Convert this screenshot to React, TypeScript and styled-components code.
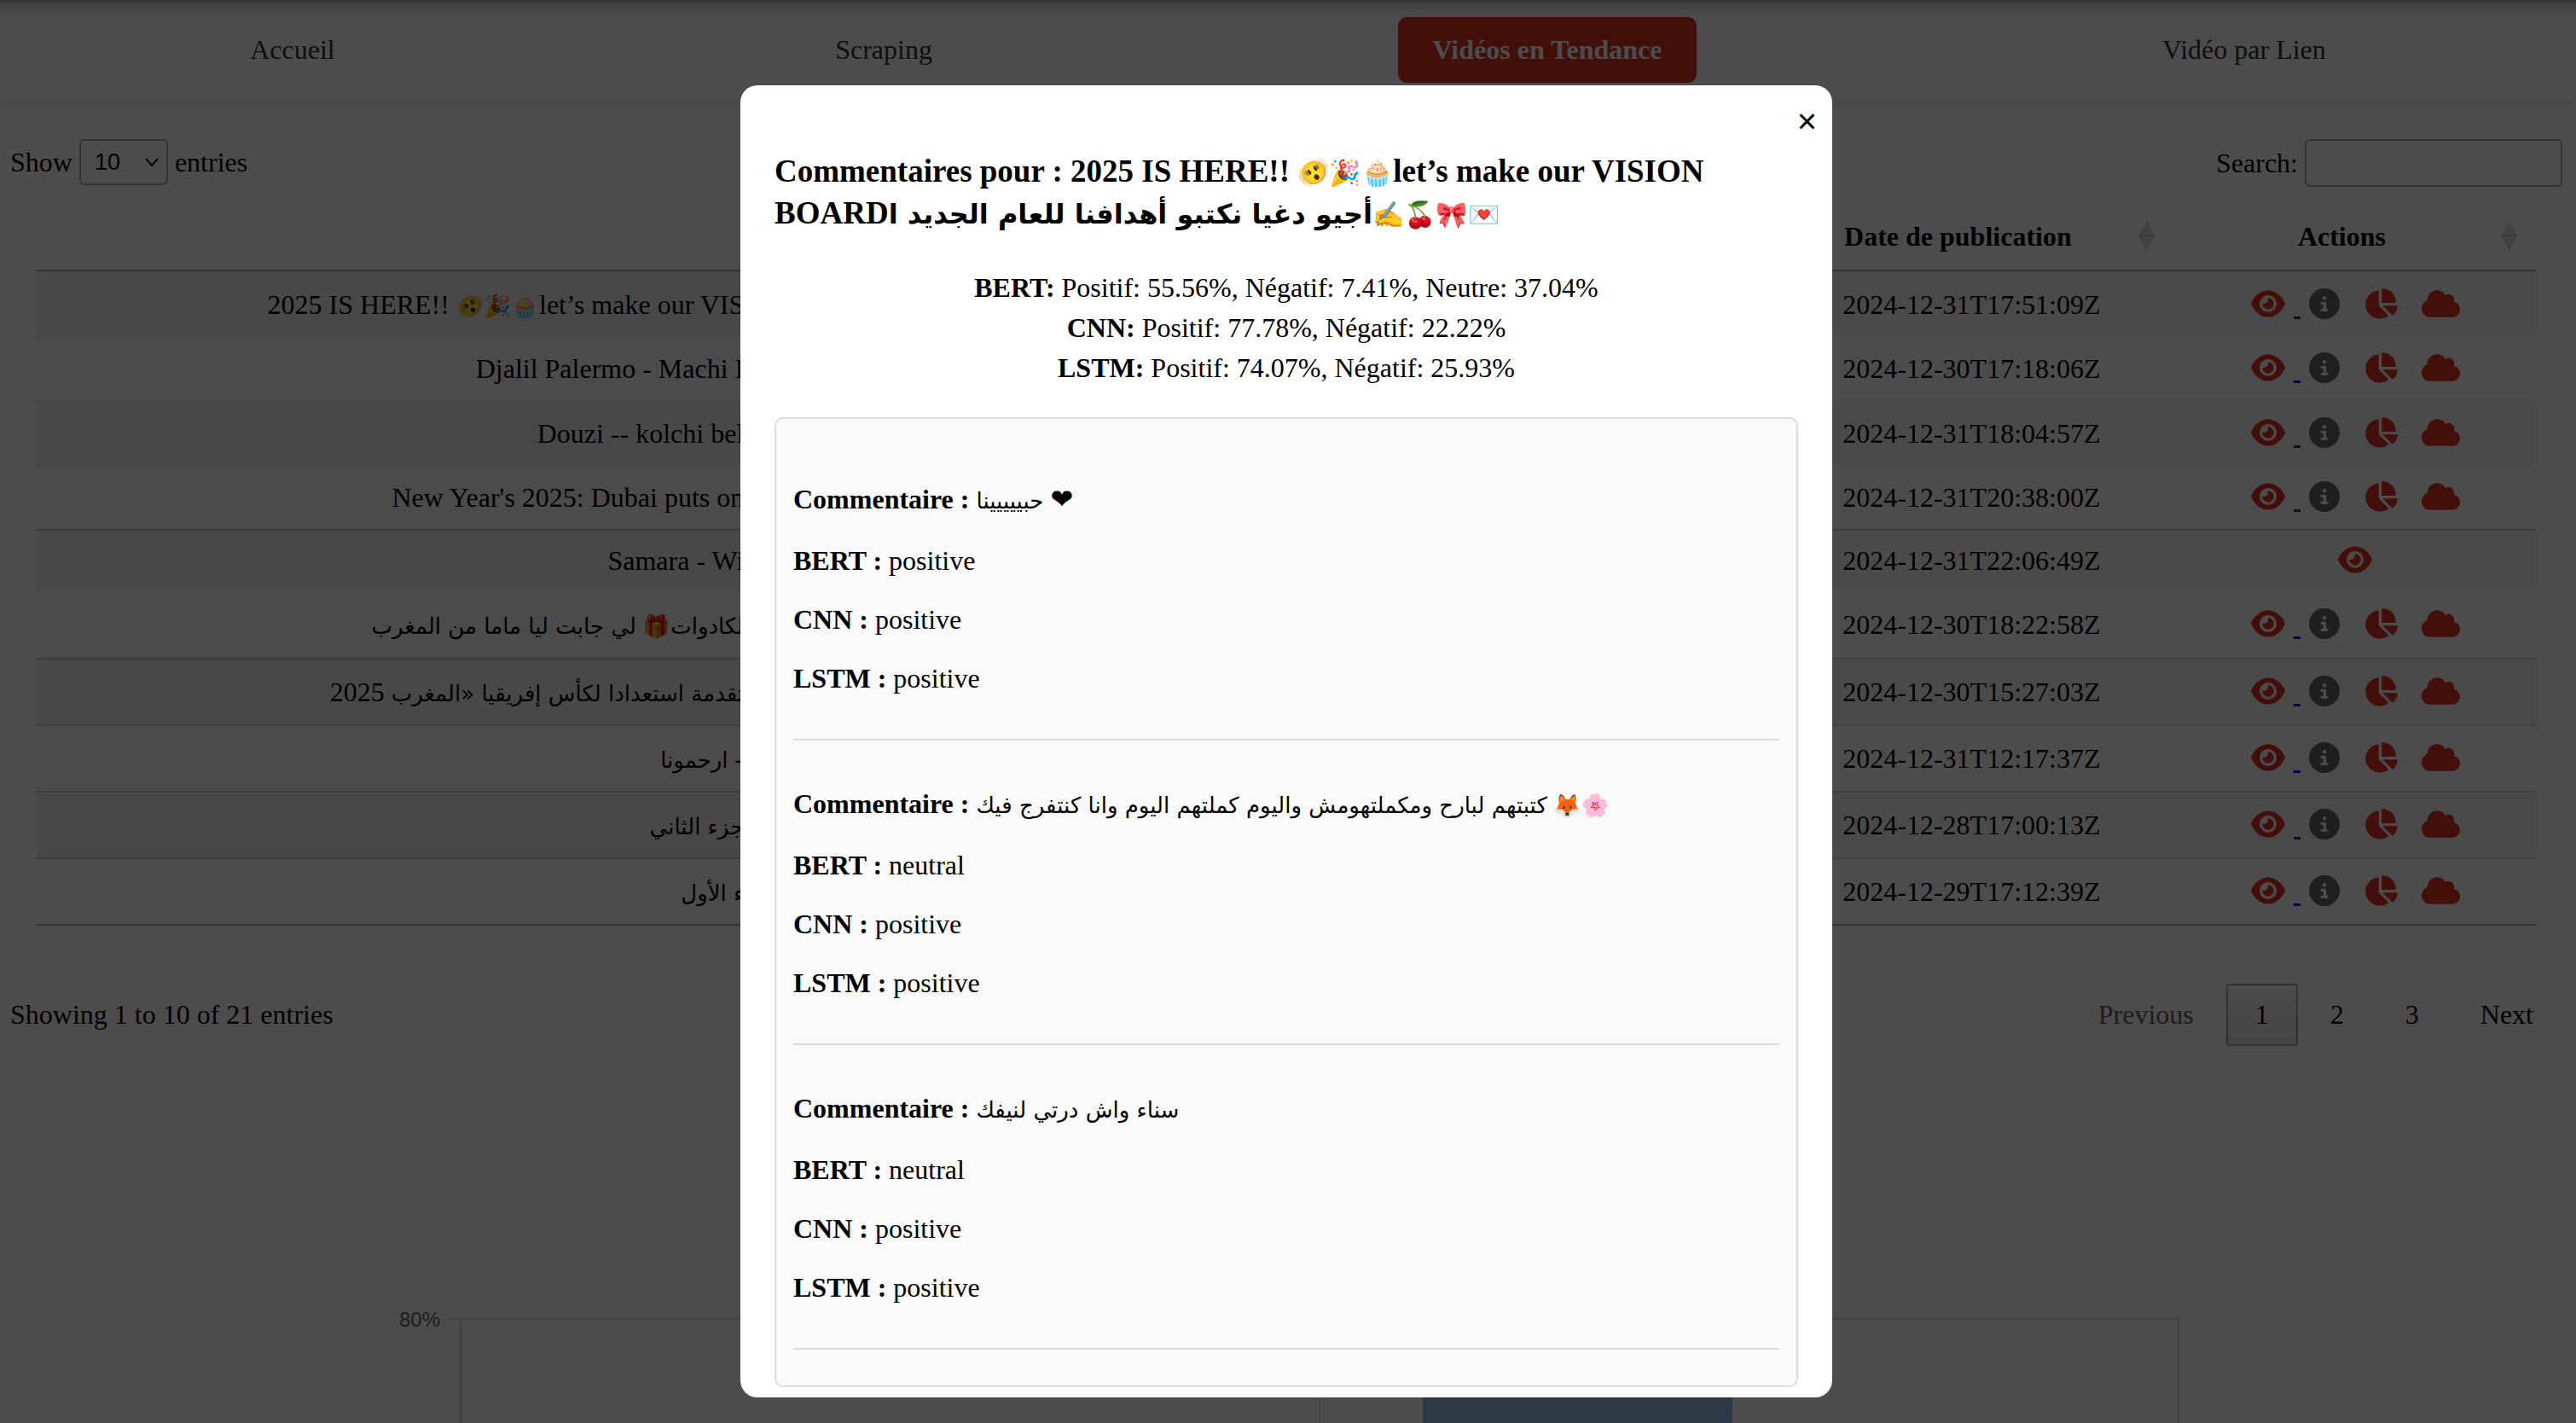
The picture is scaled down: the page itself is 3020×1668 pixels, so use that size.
import React from "react";
import styled, { createGlobalStyle } from "styled-components";
import { FaCircleInfo, FaChartPie, FaCloud, FaEye } from "react-icons/fa6";

const GlobalStyle = createGlobalStyle`
  * { box-sizing: border-box; }
  body {
    margin: 0;
    background: #fff;
    color: #000;
    font-family: "Liberation Serif", "Times New Roman", "DejaVu Sans", "Noto Color Emoji", serif;
    font-size: 32px;
    line-height: 37px;
  }
`;

const Page = styled.div`
  height: 100vh;
  overflow: hidden;
`;

const Nav = styled.nav`
  display: flex;
  justify-content: space-around;
  padding: 20px 0;
  background: linear-gradient(#b4b4b4, #e9e9e9 10px, #fbfbfb 22px, #ffffff 30px);
  box-shadow: 0 4px 16px rgba(0, 0, 0, 0.1);
`;

const NavLink = styled.a<{ $active?: boolean }>`
  padding: 20px 40px;
  border-radius: 10px;
  text-decoration: none;
  color: ${(p) => (p.$active ? "#fff" : "#333")};
  background: ${(p) => (p.$active ? "#e23222" : "transparent")};
  font-weight: ${(p) => (p.$active ? 700 : 400)};
`;

const Content = styled.main`
  padding: 46px 16px 0 12px;
`;

const Controls = styled.div`
  display: flex;
  justify-content: space-between;
  align-items: flex-start;
`;

const ControlLabel = styled.label`
  display: flex;
  align-items: center;
  gap: 8px;
`;

const LengthSelect = styled.select`
  width: 104px;
  height: 54px;
  padding: 0 16px;
  border: 2px solid #aaa;
  border-radius: 6px;
  color: #000;
  font: 27px "Liberation Sans", Arial, sans-serif;
  appearance: none;
  background: no-repeat right 8px center / 18px 12px
    url("data:image/svg+xml,%3Csvg xmlns='http://www.w3.org/2000/svg' viewBox='0 0 18 12'%3E%3Cpath d='M2 2l7 8 7-8' fill='none' stroke='black' stroke-width='2'/%3E%3C/svg%3E");
`;

const SearchInput = styled.input`
  width: 302px;
  height: 56px;
  padding: 10px;
  border: 2px solid #aaa;
  border-radius: 6px;
  background: transparent;
  font: 27px "Liberation Sans", Arial, sans-serif;
`;

const TableWrap = styled.div`
  padding: 20px 30px 0;
`;

const Table = styled.table`
  width: 100%;
  table-layout: fixed;
  border-collapse: separate;
  border-spacing: 0;
  border-bottom: 2px solid rgba(0, 0, 0, 0.3);
`;

const Col = styled.col<{ $width?: string }>`
  width: ${(p) => p.$width ?? "auto"};
`;

const HeadCell = styled.th`
  position: relative;
  height: 79px;
  padding: 0 52px 0 20px;
  border-bottom: 2px solid rgba(0, 0, 0, 0.3);
  text-align: center;
`;

const SortIcon = styled.svg`
  position: absolute;
  right: 22px;
  top: 20px;
  width: 20px;
  height: 36px;
  fill: rgba(0, 0, 0, 0.13);
`;

const Row = styled.tr<{ $tall: boolean }>`
  height: ${(p) => (p.$tall ? 78 : 73)}px;

  &:nth-child(odd) td { background: #f9f9f9; }
  &:nth-child(odd) td:first-child { background: #f1f1f1; }
  &:nth-child(even) td:first-child { background: #fafafa; }
  & + & td { border-top: 2px solid rgba(0, 0, 0, 0.15); }
`;

const Cell = styled.td`
  padding: 0 20px;
  text-align: center;
  white-space: nowrap;
`;

const TitleCell = styled(Cell)`
  text-align: right;
`;

const ArabicRun = styled.span`
  font-family: "DejaVu Sans", sans-serif;
  font-size: 26px;
  line-height: 0;

  h3 & { font-size: 32px; }
`;

const EmojiRun = styled.span`
  font-size: 26px;
  line-height: 0;

  h3 & { font-size: 30px; }
`;

const ActionLink = styled.a<{ $visited?: boolean }>`
  color: ${(p) => (p.$visited ? "#551a8b" : "#0000ee")};
  text-decoration: underline;
  text-decoration-thickness: 3px;
  white-space: pre;
`;

const IconButton = styled.button`
  padding: 0;
  border: 0;
  background: none;
  font: inherit;
`;

const IconMark = styled.span<{ $color: string; $width: number }>`
  color: ${(p) => p.$color};
  line-height: 0;

  svg {
    width: ${(p) => p.$width}px;
    height: 36px;
    margin: 0 10px;
    vertical-align: -5px;
  }
`;

const Footer = styled.div`
  display: flex;
  justify-content: space-between;
  align-items: center;
  padding-top: 68px;
`;

const Pager = styled.div`
  display: flex;
  gap: 4px;
`;

const PageButton = styled.button<{ $current?: boolean }>`
  padding: 16px 32px;
  border: 2px solid ${(p) => (p.$current ? "rgba(0, 0, 0, 0.3)" : "transparent")};
  border-radius: 4px;
  background: ${(p) => (p.$current ? "linear-gradient(#fafafa, #e4e4e4)" : "transparent")};
  color: #000;
  font: inherit;

  &:disabled { color: #666; }
`;

const Chart = styled.svg`
  display: block;
  width: 100%;
  max-width: 2100px;
  margin: 292px auto 0;
`;

const Overlay = styled.div`
  position: fixed;
  inset: 0;
  display: flex;
  justify-content: center;
  align-items: flex-start;
  padding-top: 100px;
  padding-right: 4px;
  background: rgba(0, 0, 0, 0.7);
`;

const Dialog = styled.div`
  position: relative;
  width: 1280px;
  max-width: 90%;
  padding: 76px 40px 12px;
  border-radius: 20px;
  background: #fff;
`;

const CloseButton = styled.button`
  position: absolute;
  top: 20px;
  right: 18px;
  padding: 0;
  border: 0;
  background: none;
  color: #000;
  font: 40px/44px "Liberation Sans", Arial, sans-serif;
`;

const DialogTitle = styled.h3`
  margin: 0;
  font-size: 37px;
  line-height: 49px;
`;

const Scores = styled.div`
  padding: 40px 0 34px;
  line-height: 47px;
  text-align: center;
`;

const CommentList = styled.div`
  padding: 20px 20px 42px;
  border: 2px solid #ddd;
  border-radius: 10px;
  background: #f9f9f9;
`;

const Comment = styled.article`
  padding: 20px 0;
  border-bottom: 2px solid #ddd;
`;

const Line = styled.p<{ $comment?: boolean }>`
  margin: 32px 0;
  line-height: ${(p) => (p.$comment ? 44 : 37)}px;
`;

type Video = { title: string; date: string; tall?: boolean; visited?: boolean; pending?: boolean };

const videos: Video[] = [
  { title: "2025 IS HERE!! 🫨🎉🧁let’s make our VIS", date: "2024-12-31T17:51:09Z", tall: true, visited: true },
  { title: "Djalil Palermo - Machi I", date: "2024-12-30T17:18:06Z" },
  { title: "Douzi -- kolchi bel", date: "2024-12-31T18:04:57Z", tall: true, visited: true },
  { title: "New Year's 2025: Dubai puts on", date: "2024-12-31T20:38:00Z", visited: true },
  { title: "Samara - Wi", date: "2024-12-31T22:06:49Z", pending: true },
  { title: "لكادوات🎁 لي جابت ليا ماما من المغرب", date: "2024-12-30T18:22:58Z", tall: true },
  { title: "تقدمة استعدادا لكأس إفريقيا «المغرب 2025", date: "2024-12-30T15:27:03Z", tall: true },
  { title: "\u200F- ارحمونا", date: "2024-12-31T12:17:37Z", tall: true },
  { title: "جزء الثاني", date: "2024-12-28T17:00:13Z", tall: true, visited: true },
  { title: "ء الأول", date: "2024-12-29T17:12:39Z", tall: true },
];

const scores = [
  { model: "BERT", text: "Positif: 55.56%, Négatif: 7.41%, Neutre: 37.04%" },
  { model: "CNN", text: "Positif: 77.78%, Négatif: 22.22%" },
  { model: "LSTM", text: "Positif: 74.07%, Négatif: 25.93%" },
];

const comments = [
  { text: "حبييييينا ❤︎", bert: "positive", cnn: "positive", lstm: "positive" },
  { text: "كتبتهم لبارح ومكملتهومش واليوم كملتهم اليوم وانا كنتفرج فيك 🦊🌸", bert: "neutral", cnn: "positive", lstm: "positive" },
  { text: "سناء واش درتي لنيفك", bert: "neutral", cnn: "positive", lstm: "positive" },
];

const RED = "#e23222";
const GREY = "#6a6a6a";

const RUNS = /([\u0600-\u06FF]+(?:[\s«]+[\u0600-\u06FF]+)*|(?:\p{Emoji_Presentation}|\p{Extended_Pictographic}\uFE0F)+)/u;

/* Sets Arabic and emoji runs at sizes that sit well beside the Latin serif. */
function MixedText({ children }: { children: string }) {
  return (
    <>
      {children.split(RUNS).map((part, i) => {
        if (i % 2 === 0) return part;
        return /^[\u0600-\u06FF]/.test(part)
          ? <ArabicRun key={i}>{part}</ArabicRun>
          : <EmojiRun key={i}>{part}</EmojiRun>;
      })}
    </>
  );
}

function Sort() {
  return (
    <SortIcon viewBox="0 0 20 36" aria-hidden="true">
      <path d="M10 0L20 18H0z" />
      <path d="M0 16H20L10 36z" />
    </SortIcon>
  );
}

function Actions({ video }: { video: Video }) {
  return (
    <>
      <ActionLink href="#video" $visited={video.visited} aria-label="Voir la vidéo">
        <IconMark $color={RED} $width={40}><FaEye /></IconMark>
        {video.pending ? null : " "}
      </ActionLink>
      {!video.pending && (
        <>
          <IconButton aria-label="Détails"><IconMark $color={GREY} $width={36}><FaCircleInfo /></IconMark></IconButton>{" "}
          <IconButton aria-label="Statistiques"><IconMark $color={RED} $width={40}><FaChartPie /></IconMark></IconButton>{" "}
          <IconButton aria-label="Nuage de mots"><IconMark $color={RED} $width={45}><FaCloud /></IconMark></IconButton>
        </>
      )}
    </>
  );
}

export default function App() {
  return (
    <Page>
      <GlobalStyle />
      <Nav>
        <NavLink href="#accueil">Accueil</NavLink>
        <NavLink href="#scraping">Scraping</NavLink>
        <NavLink href="#tendance" $active>Vidéos en Tendance</NavLink>
        <NavLink href="#lien">Vidéo par Lien</NavLink>
      </Nav>
      <Content>
        <Controls>
          <ControlLabel>
            Show
            <LengthSelect defaultValue="10">
              <option>10</option>
              <option>25</option>
              <option>50</option>
            </LengthSelect>
            entries
          </ControlLabel>
          <ControlLabel>
            Search:
            <SearchInput type="search" />
          </ControlLabel>
        </Controls>
        <TableWrap>
          <Table>
            <colgroup>
              <Col $width="29%" />
              <Col />
              <Col $width="16.2%" />
              <Col $width="14.5%" />
            </colgroup>
            <thead>
              <tr>
                <HeadCell aria-label="Titre" />
                <HeadCell aria-label="Description" />
                <HeadCell>Date de publication<Sort /></HeadCell>
                <HeadCell>Actions<Sort /></HeadCell>
              </tr>
            </thead>
            <tbody>
              {videos.map((video) => (
                <Row key={video.date} $tall={!!video.tall}>
                  <TitleCell><MixedText>{video.title}</MixedText></TitleCell>
                  <Cell />
                  <Cell>{video.date}</Cell>
                  <Cell><Actions video={video} /></Cell>
                </Row>
              ))}
            </tbody>
          </Table>
        </TableWrap>
        <Footer>
          <span>Showing 1 to 10 of 21 entries</span>
          <Pager>
            <PageButton disabled>Previous</PageButton>
            <PageButton $current>1</PageButton>
            <PageButton>2</PageButton>
            <PageButton>3</PageButton>
            <PageButton>Next</PageButton>
          </Pager>
        </Footer>
        <Chart viewBox="0 0 2100 400" role="img" aria-label="Résultats par modèle">
          <text x="58" y="37" textAnchor="end" fontFamily="Liberation Sans, Arial, sans-serif" fontSize="24" fill="#666">80%</text>
          <g fill="none" stroke="rgba(0,0,0,0.1)" strokeWidth="2">
            <path d="M66 28H2096M1089 28V400M2096 28V400" />
            <path d="M82 28V400" stroke="rgba(0,0,0,0.2)" />
          </g>
          <rect x="1210" y="60" width="363" height="340" fill="rgb(150,190,230)" />
        </Chart>
      </Content>
      <Overlay>
        <Dialog role="dialog" aria-modal="true" aria-labelledby="dialog-title">
          <CloseButton aria-label="Fermer">×</CloseButton>
          <DialogTitle id="dialog-title">
            <MixedText>
              {"Commentaires pour : 2025 IS HERE!! 🫨🎉🧁let’s make our VISION BOARDأجيو دغيا نكتبو أهدافنا للعام الجديد ا✍️🍒🎀💌"}
            </MixedText>
          </DialogTitle>
          <Scores>
            {scores.map((s) => (
              <div key={s.model}><b>{s.model}:</b> {s.text}</div>
            ))}
          </Scores>
          <CommentList>
            {comments.map((c) => (
              <Comment key={c.text}>
                <Line $comment><b>Commentaire :</b> <MixedText>{c.text}</MixedText></Line>
                <Line><b>BERT :</b> {c.bert}</Line>
                <Line><b>CNN :</b> {c.cnn}</Line>
                <Line><b>LSTM :</b> {c.lstm}</Line>
              </Comment>
            ))}
          </CommentList>
        </Dialog>
      </Overlay>
    </Page>
  );
}
